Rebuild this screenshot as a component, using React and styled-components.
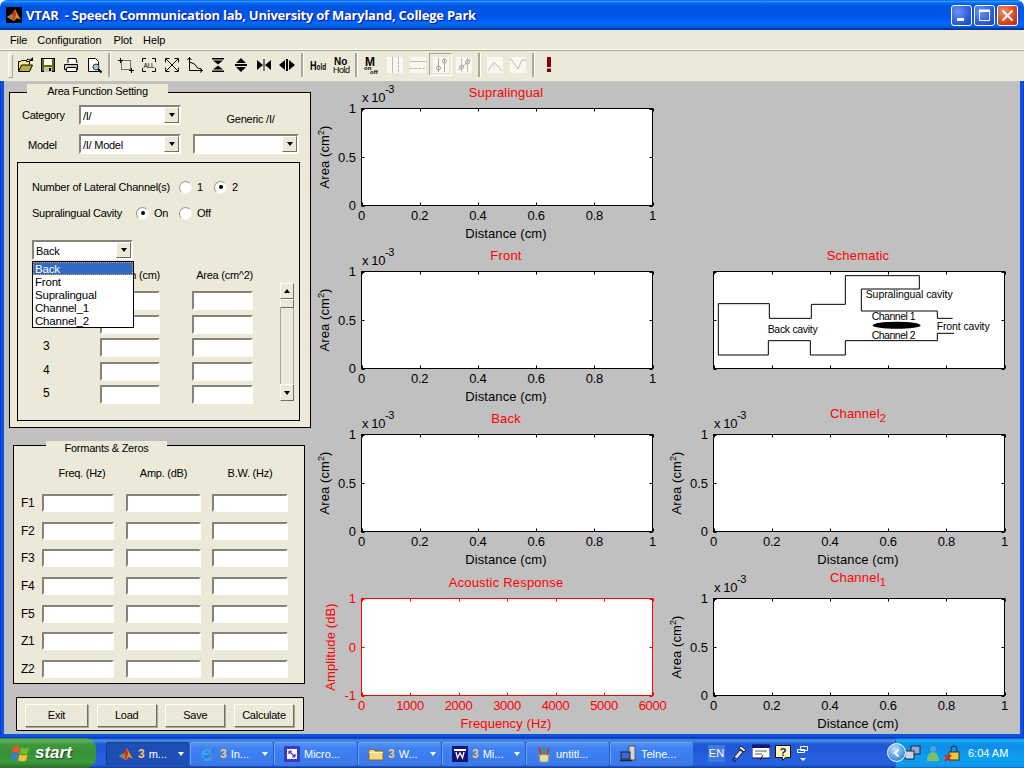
import React from "react";
import styled, { createGlobalStyle } from "styled-components";

const Global = createGlobalStyle`
    html, body { margin: 0; padding: 0; background: #fff; }
    * { box-sizing: border-box; }
    body { font-family: "Liberation Sans", Arial, sans-serif; font-size: 11px; color: #000; }
`
const Screen = styled.div`
    width: 1024px;
    height: 768px;
    display: flex;
    flex-direction: column;
    overflow: hidden;
`
const TitleBar = styled.div`
    height: 30px;
    flex: none;
    display: flex;
    align-items: center;
    padding: 0 6px 0 6px;
    border-radius: 7px 7px 0 0;
    background: linear-gradient(180deg,#0058ee 0%,#3593ff 4%,#288eff 6%,#127dff 8%,#036ffc 10%,#0262ee 14%,#0057e5 20%,#0054e3 24%,#0055eb 56%,#005bf5 66%,#026afe 76%,#0062ef 86%,#0052d6 92%,#0040ab 94%,#003092 100%);
`
const TitleText = styled.div`
    margin-left: 4px;
    flex: 1;
    color: #fff;
    font-family: "Open Sans", "Liberation Sans", sans-serif;
    font-weight: 700;
    font-size: 13px;
    letter-spacing: -0.25px;
    white-space: pre;
    text-shadow: 1px 1px 1px #0f1089;
`
const WinBtn = styled.div`
    width: 21px;
    height: 21px;
    margin-left: 2px;
    border: 1px solid #fff;
    border-radius: 3px;
    display: flex;
    align-items: center;
    justify-content: center;
    background: ${p => p.$close
        ? "radial-gradient(circle at 30% 30%, #f0906a, #d8431c 60%, #b52a0c)"
        : "radial-gradient(circle at 30% 30%, #6d92ee, #2f5ee0 60%, #1a3fb8)"};
`
const MenuBar = styled.div`
    height: 19px;
    flex: none;
    display: flex;
    align-items: center;
    background: #ece9d8;
    padding-left: 10px;
    letter-spacing: -0.1px;
`
const MenuItem = styled.span`
    margin-right: ${p => p.$gap}px;
`
const ToolBar = styled.div`
    height: 32px;
    flex: none;
    display: flex;
    align-items: center;
    padding: 0 0 2px 13px;
    background: #ece9d8;
    border-top: 1px solid #fff;
    box-shadow: inset 0 1px 0 #aca899;
    position: relative;
`
const Grip = styled.div`
    position: absolute;
    left: 8px;
    top: 4px;
    width: 5px;
    height: 24px;
    border: 1px solid #fff;
    border-right-color: #aca899;
    border-bottom-color: #aca899;
`
const ToolBtn = styled.div`
    width: 23px;
    height: 23px;
    flex: none;
    display: flex;
    align-items: center;
    justify-content: center;
    ${p => p.$on && "border: 1px solid; border-color: #aca899 #fff #fff #aca899;"}
`
const ToolSep = styled.div`
    width: ${p => p.$w || 8}px;
    height: 24px;
    flex: none;
    display: flex;
    justify-content: center;
    &::before {
        content: "";
        width: 2px;
        height: 100%;
        background: #aca899;
        border-right: 1px solid #fff;
    }
`
const Frame = styled.div`
    flex: 1;
    min-height: 0;
    padding: 0 4px 4px;
    background: #0855dd;
    box-shadow: inset 1px 0 #0831d9, inset -1px 0 #0831d9, inset 0 -1px #0831d9;
`
const Body = styled.div`
    height: 100%;
    display: flex;
    background: #c0c0c0;
`
const Sidebar = styled.div`
    width: 306px;
    flex: none;
    display: flex;
    flex-direction: column;
    align-items: flex-start;
    letter-spacing: -0.25px;
`
const Panel = styled.div`
    position: relative;
    flex: none;
    border: 1px solid #000;
    background: #ece9d8;
`
const AreaPanel = styled(Panel)`
    margin: 11px 0 0 5px;
    width: 302px;
    height: 336px;
    padding: 12px 0 0 12px;
`
const FormantPanel = styled(Panel)`
    margin: 17px 0 0 9px;
    width: 292px;
    height: 239px;
    padding: 19px 0 0 7px;
`
const ActionPanel = styled(Panel)`
    margin: 13px 0 0 12px;
    width: 288px;
    height: 34px;
    padding: 6px 9px 0 8px;
    display: flex;
    justify-content: space-between;
`
const PanelTab = styled.div`
    position: absolute;
    left: ${p => p.$left}px;
    top: ${p => p.$top}px;
    width: ${p => p.$w}px;
    height: 14px;
    background: #ece9d8;
    text-align: center;
    line-height: 14px;
`
const TopGrid = styled.div`
    display: grid;
    grid-template-columns: 57px 102px 12px 106px;
    grid-template-rows: 20px 20px;
    row-gap: 9px;
`
const FieldLabel = styled.div`
    grid-column: 1;
    grid-row: ${p => p.$row};
    align-self: center;
    padding-left: ${p => p.$indent || 0}px;
    padding-top: ${p => p.$down || 0}px;
`
const GenericLabel = styled.div`
    grid-column: 4;
    grid-row: 1;
    text-align: center;
    padding: 8px 0 0 9px;
`
const Combo = styled.div`
    height: 20px;
    width: ${p => (p.$w ? `${p.$w}px` : "auto")};
    display: flex;
    align-items: center;
    justify-content: space-between;
    padding-left: 2px;
    background: #fff;
    border: 2px solid;
    border-color: #85837a #fff #fff #85837a;
    ${p => p.$col && `grid-column: ${p.$col}; grid-row: ${p.$row};`}
`
const ComboValue = styled.span`
    padding-top: 1px;
`
const ComboArrow = styled.div`
    width: 15px;
    height: 16px;
    margin-left: auto;
    display: flex;
    align-items: center;
    justify-content: center;
    background: #ece9d8;
    border: 1px solid;
    border-color: #fff #716f64 #716f64 #fff;
    &::after {
        content: "";
        border: 3.5px solid transparent;
        border-top: 4px solid #000;
        border-bottom: 0;
    }
`
const InnerBox = styled.div`
    position: relative;
    margin: 8px 0 0 -5px;
    width: 283px;
    height: 259px;
    border: 1px solid #000;
    padding: 16px 0 0 14px;
`
const OptionRow = styled.div`
    display: flex;
    height: 16px;
    align-items: center;
    margin-top: ${p => p.$top || 0}px;
`
const OptionLabel = styled.div`
    width: ${p => p.$w}px;
`
const RadioOption = styled.div`
    width: ${p => p.$w}px;
    display: flex;
    align-items: center;
    gap: 5px;
`
const Radio = styled.span`
    width: 13px;
    height: 13px;
    flex: none;
    border-radius: 50%;
    background: #fff;
    border: 1px solid;
    border-color: #9a9888 #f5f4ec #f5f4ec #9a9888;
    display: flex;
    align-items: center;
    justify-content: center;
    &::after {
        content: "";
        width: 4px;
        height: 4px;
        border-radius: 50%;
        background: ${p => (p.$on ? "#000" : "transparent")};
    }
`
const Selector = styled.div`
    margin-top: 19px;
`
const TableArea = styled.div`
    display: flex;
    margin-top: 7px;
`
const TableCol = styled.div`
    width: 221px;
`
const TableHead = styled.div`
    display: grid;
    grid-template-columns: 128px 93px;
    height: 16px;
    line-height: 16px;
    text-align: right;
`
const TableGrid = styled.div`
    margin-top: 8px;
    display: grid;
    grid-template-columns: 68px 60px 32px 61px;
    grid-auto-rows: 19px;
    row-gap: 4.5px;
`
const RowNum = styled.div`
    padding-left: 11px;
    font-size: 12px;
    line-height: 17px;
`
const Sunken = styled.div`
    height: ${p => p.$h || 19}px;
    width: ${p => (p.$w ? `${p.$w}px` : "auto")};
    background: #fff;
    border: 2px solid;
    border-color: #85837a #fff #fff #85837a;
    ${p => p.$col && `grid-column: ${p.$col};`}
`
const Scrollbar = styled.div`
    margin: 16px 0 0 27px;
    width: 14px;
    height: 118px;
    display: flex;
    flex-direction: column;
    border-left: 1px solid #aca899;
    border-right: 1px solid #aca899;
`
const ScrollBtn = styled.div`
    width: 14px;
    height: ${p => p.$h}px;
    margin-left: -1px;
    background: #ece9d8;
    border: 1px solid;
    border-color: #fff #716f64 #716f64 #fff;
    display: flex;
    align-items: center;
    justify-content: center;
    flex: none;
    &::after {
        ${p => p.$dir && `
        content: "";
        border: 3.5px solid transparent;
        ${p.$dir === "up" ? "border-bottom: 4px solid #000; border-top: 0;" : "border-top: 4px solid #000; border-bottom: 0;"}
        `}
    }
`
const ScrollTrack = styled.div`
    flex: 1;
`
const Dropdown = styled.div`
    position: absolute;
    left: 14px;
    top: 98px;
    width: 102px;
    height: 67px;
    background: #fff;
    border: 1px solid #000;
    z-index: 2;
    font-size: 11.5px;
    letter-spacing: -0.2px;
`
const DropItem = styled.div`
    height: 13px;
    line-height: 14px;
    padding-left: 2px;
    ${p => p.$sel && `
        background: #316ac5;
        color: #fff;
        outline: 1px dotted #e8a33d;
        outline-offset: -1px;
    `}
`
const FormantGrid = styled.div`
    display: grid;
    grid-template-columns: 21px 84px 86px 76px;
    grid-auto-rows: 18px;
    row-gap: 9.67px;
    align-items: center;
`
const FormantHeads = styled(FormantGrid)`
    grid-auto-rows: 16px;
    margin-bottom: 13px;
`
const FormantHead = styled.div`
    grid-column: ${p => p.$col};
    width: ${p => p.$w}px;
    padding-left: ${p => p.$pad || 0}px;
    text-align: center;
`
const FLabel = styled.div`
    font-size: 12px;
`
const ActionBtn = styled.div`
    width: ${p => p.$w}px;
    height: 23px;
    padding-bottom: 2px;
    display: flex;
    align-items: center;
    justify-content: center;
    border: 1px solid;
    border-color: #fff #716f64 #716f64 #fff;
    box-shadow: 1px 1px 0 #aca899;
`
const PlotGrid = styled.div`
    margin-top: 1px;
    display: grid;
    grid-template-columns: 352px 352px;
    grid-template-rows: 163px 163px 164px 163px;
`
const PlotSvg = styled.svg`
    display: block;
    overflow: visible;
    grid-column: ${p => p.$col};
    grid-row: ${p => p.$row};
`
const PlotText = styled.text`
    font-family: "Liberation Sans", Arial, sans-serif;
    font-size: ${p => p.$size || 13}px;
    font-weight: ${p => p.$weight || 400};
    fill: ${p => p.$fill || "#000"};
    letter-spacing: ${p => p.$ls ?? 0}px;
`
const TaskBar = styled.div`
    height: 30px;
    flex: none;
    display: flex;
    align-items: center;
    background: linear-gradient(180deg,#1f2f86 0,#3165c4 3%,#3682e5 6%,#4490e6 10%,#3883e5 12%,#2b71e0 15%,#2663da 18%,#235bd6 20%,#2258d5 23%,#2157d6 38%,#245ddb 54%,#2562df 86%,#245fdc 89%,#2158d4 92%,#1d4ec0 95%,#1941a5 98%);
`
const StartBtn = styled.div`
    width: 96px;
    height: 30px;
    flex: none;
    margin-right: 10px;
    display: flex;
    align-items: center;
    gap: 4px;
    padding-left: 11px;
    border-radius: 0 10px 10px 0;
    color: #fff;
    font-size: 17px;
    font-weight: 700;
    font-style: italic;
    text-shadow: 1px 1px 1px #1c4a1c;
    background: linear-gradient(180deg,#3d7f3d 0,#62b05c 8%,#3f9a3f 20%,#379037 50%,#3c9a3c 80%,#2d6e2d 100%);
`
const TaskBtn = styled.div`
    width: 83px;
    height: 24px;
    flex: none;
    margin: 1px 1px 0 0;
    border-radius: 3px;
    display: flex;
    align-items: center;
    padding-left: ${p => (p.$active ? 12 : 10)}px;
    gap: 4px;
    color: #fff;
    position: relative;
    white-space: nowrap;
    background: ${p => (p.$active ? "#1e4fb4" : "linear-gradient(180deg,#5a94f0,#3c81f3 30%,#3b78e6)")};
    box-shadow: ${p => (p.$active ? "inset 1px 1px 1px #123a8a" : "inset 1px 1px 0 #6fa3f5")};
`
const TaskCount = styled.b`
    color: #ffc766;
    font-size: 12px;
`
const TaskCaret = styled.span`
    position: absolute;
    right: 5px;
    top: 10px;
    border: 3px solid transparent;
    border-top: 4px solid #fff;
    border-bottom: 0;
`
const LangBox = styled.div`
    margin-left: 14px;
    width: 17px;
    height: 17px;
    color: #fff;
    background: #3f79dd;
    text-align: center;
    line-height: 17px;
    flex: none;
`
const LangTools = styled.div`
    display: flex;
    align-items: center;
    gap: 4px;
    margin-left: 5px;
`
const Tray = styled.div`
    margin-left: auto;
    width: 129px;
    height: 30px;
    flex: none;
    position: relative;
    display: flex;
    align-items: center;
    gap: 3px;
    padding-left: 8px;
    color: #fff;
    background: linear-gradient(180deg,#0c59b9 0,#139ee9 5%,#18b5f2 10%,#139beb 15%,#1290e8 20%,#0d8dea 30%,#0d9ff1 65%,#0f9eed 82%,#119be9 90%,#1392e2 95%,#0d5fc4 100%);
    border-left: 1px solid #0e6fc8;
`
const Chevron = styled.div`
    position: absolute;
    left: -9px;
    top: 5px;
    width: 19px;
    height: 19px;
    border-radius: 50%;
    background: radial-gradient(circle at 40% 30%, #bfe0fb, #3b8be6 70%);
    border: 1px solid #fff;
    display: flex;
    align-items: center;
    justify-content: center;
`
const Clock = styled.div`
    margin-left: 4px;
    white-space: nowrap;
`

const MatlabLogo = ({ bg }) => (
    <svg width="16" height="16" viewBox="0 0 16 16" style={{ flex: "none" }}>
        {bg && <rect width="16" height="16" fill="#000" />}
        <path d="M1 10 6 7l3-5 3 6 3 5-4-2-3 3z" fill="#f08a1c" />
        <path d="M6 7 9 2l1 6-2 6-2-3z" fill="#d8261c" />
        <path d="M1 10l5-3 2 3-3 2z" fill="#6f8f6f" />
    </svg>
)

const tool = {
    open: <>
        <path d="M1.5 13.5v-9h2l1-1h4l1 1h3v3" fill="#ffe88c" stroke="#000" />
        <path d="M1.5 14.5 4.5 8h11l-3 6.5z" fill="#b8b040" stroke="#000" />
        <path d="M9 4c1-2 3-2.500 4.500-1" fill="none" stroke="#000" />
        <path d="M12 4h4V0z" />
    </>,
    save: <>
        <rect x="1.500" y="1.500" width="13" height="13" fill="#6b6b00" stroke="#000" />
        <rect x="4" y="2" width="8" height="6" fill="#fff" />
        <rect x="4" y="10" width="8" height="5" fill="#c0c0c0" />
        <rect x="9" y="11" width="2" height="3" />
    </>,
    print: <>
        <path d="M5 6V1.500h8L14 6" fill="#fff" stroke="#000" />
        <path d="M1.500 7.500h13v5h-13z" fill="#c0c0c0" stroke="#000" />
        <path d="M4 10.500h9l1 4H3z" fill="#fff" stroke="#000" />
        <path d="M3 9h2" stroke="#fff" />
    </>,
    preview: <>
        <path d="M2.500 1.500h7l3 3v10h-10z" fill="#fff" stroke="#000" />
        <circle cx="10" cy="10" r="3" fill="#9ac8dc" stroke="#333" />
        <path d="M12 12l3.500 3.500" stroke="#000" strokeWidth="2" />
    </>,
    region: <>
        <rect x="3.500" y="3.500" width="9" height="9" fill="none" stroke="#000" strokeDasharray="1 1" />
        <path d="M0 3.500h5M2.500 1v5M11 13.500h5M13.500 11v5" stroke="#000" />
    </>,
    all: <>
        <path d="M1.500 5V1.500H5M11 1.500h3.500V5M1.500 11v3.500H5M11 14.500h3.500V11" fill="none" stroke="#000" />
        <PlotText x="8" y="10.500" textAnchor="middle" $size={6.500} $ls={-0.2}>ALL</PlotText>
    </>,
    fit: <>
        <path d="M2 2l12 12M14 2 2 14" stroke="#000" />
        <path d="M1.500 5.500v-4h4M10.500 1.500h4v4M1.500 10.500v4h4M14.500 10.500v4h-4" fill="none" stroke="#000" />
    </>,
    axes: <>
        <path d="M2.500 1v12.500H16" fill="none" stroke="#000" />
        <path d="M2.500 5l5 2 3 4 4 1" fill="none" stroke="#000" />
        <path d="M.5 3 2.500.5 4.500 3M13 11.500l2.500 2-2.500 2" fill="none" stroke="#000" />
    </>,
    shrinkV: <path d="M2 1h12v1.500H2zM3 3.500h10L8 7.500zM3 12.500h10L8 8.500zM2 13.500h12V15H2z" />,
    growV: <path d="M8 1l5 5H3zM2 7h12v2H2zM8 15l-5-5h10z" />,
    shrinkH: <path d="M1 3l6 5-6 5zM7.500 2h1v12h-1zM15 3 9 8l6 5z" />,
    growH: <path d="M6 3 0 8l6 5zM7 2h2v12H7zM10 3l6 5-6 5z" />,
    hold: (
        <PlotText x="0" y="13" $size={9} $weight={700} textLength="16" lengthAdjust="spacingAndGlyphs">
            <tspan style={{ fontSize: 13 }}>H</tspan>old
        </PlotText>
    ),
    nohold: (
        <PlotText $size={9}>
            <tspan x="1" y="8" style={{ fontWeight: 700, fontSize: 10 }}>No</tspan>
            <tspan x="0" y="16" style={{ letterSpacing: -0.5 }}>Hold</tspan>
        </PlotText>
    ),
    mtog: (
        <PlotText $size={6} $weight={700}>
            <tspan x="1" y="9" style={{ fontSize: 12 }}>M</tspan>
            <tspan x="0" y="13">on</tspan>
            <tspan x="6" y="17">off</tspan>
        </PlotText>
    ),
    vcursor: <>
        <rect width="16" height="16" fill="#f8f7f0" />
        <path d="M5.500 0v16" stroke="#bbb" />
        <path d="M11.500 0v16" stroke="#bbb" strokeDasharray="3 1" />
    </>,
    hcursor: <>
        <rect width="16" height="16" fill="#f8f7f0" />
        <path d="M0 4.500h16" stroke="#bbb" />
        <path d="M0 11.500h16" stroke="#bbb" strokeDasharray="3 1" />
    </>,
    vmark: <>
        <rect width="16" height="16" fill="#f8f7f0" />
        <path d="M5.500 1v14M11.500 1v14" stroke="#aaa" />
        <circle cx="5.500" cy="11" r="2" fill="none" stroke="#aaa" />
        <circle cx="11.500" cy="4" r="2" fill="none" stroke="#aaa" />
    </>,
    vslope: <>
        <rect width="16" height="16" fill="#f8f7f0" />
        <path d="M5.500 1v14M11.500 1v14M2 13 15 2" stroke="#bbb" />
        <circle cx="5.500" cy="10" r="2" fill="none" stroke="#aaa" />
        <circle cx="11.500" cy="5" r="2" fill="none" stroke="#aaa" />
    </>,
    peak: <>
        <rect width="16" height="16" fill="#f8f7f0" />
        <path d="M1 14 7 5l8 9" fill="none" stroke="#bbb" />
        <path d="M7 5v9" stroke="#ddd" />
    </>,
    valley: <>
        <rect width="16" height="16" fill="#f8f7f0" />
        <path d="M0 1l8 11 4-9h4" fill="none" stroke="#bbb" />
    </>,
    bang: <path d="M6 0h4v10H6zM6 11.500h4V15H6z" fill="#800000" />,
}

const toolbarGroups = [
    { sep: 9, items: ["open", "save", "print", "preview"] },
    { sep: 8, items: ["region", "all", "fit", "axes", "shrinkV", "growV", "shrinkH", "growH"] },
    { sep: 8, items: ["hold", "nohold"] },
    { sep: 8, items: ["mtog", "vcursor", "hcursor", "vmark", "vslope"] },
    { sep: 8, items: ["peak", "valley"] },
    { items: ["bang"] },
]

const Chart = ({ col, row, title, sub, titleY = 15, ylabel, xlabel, color = "#000", xticks, yticks, scale, ylabelX = 19, cm, children, noLabels, ls = -0.3 }) => {
    const L = 51.5, T = 26.5, W = 291, H = 97
    const nx = xticks ? xticks.length - 1 : 5
    const xs = Array.from({ length: nx + 1 })
    return (
        <PlotSvg $col={col} $row={row} width="352" height="163">
            <rect x={L} y={T} width={W} height={H} fill="#fff" stroke={color} />
            {xs.map((_, i) => {
                const x = Math.round(L + (W * i) / nx) + 0.5
                return <path key={i} d={`M${x} ${T}v3M${x} ${T + H}v-3`} stroke={color} />
            })}
            {[0, 1, 2].map((i) => {
                const y = Math.round(T + (H * i) / 2) + 0.5
                return <path key={i} d={`M${L} ${y}h3M${L + W} ${y}h-3`} stroke={color} />
            })}
            <PlotText x="196" y={titleY} textAnchor="middle" $fill="red" $ls={0.2}>
                {title}
                {sub && <tspan dy="4" style={{ fontSize: 11 }}>{sub}</tspan>}
            </PlotText>
            {scale && (
                <PlotText x="52" y="20" $ls={-0.4}>
                    x 10<tspan dy="-9" style={{ fontSize: 11 }}>-3</tspan>
                </PlotText>
            )}
            {!noLabels && xticks.map((t, i) => (
                <PlotText key={t} x={L + (W * i) / nx} y="138" textAnchor="middle" $fill={color} $ls={ls}>{t}</PlotText>
            ))}
            {!noLabels && yticks.map((t, i) => (
                <PlotText key={t} x="46" y={T + (H * i) / (yticks.length - 1) + 4.5} textAnchor="end" $fill={color}>{t}</PlotText>
            ))}
            {!noLabels && (
                <PlotText x="196" y="156" textAnchor="middle" $fill={color} $ls={0.1}>{xlabel}</PlotText>
            )}
            {!noLabels && (
                <PlotText transform={`translate(${ylabelX} 75) rotate(-90)`} textAnchor="middle" $fill={color} $ls={0.1}>
                    {ylabel}
                    {cm && <><tspan dy="-5" style={{ fontSize: 9 }}>2</tspan><tspan dy="5">)</tspan></>}
                </PlotText>
            )}
            {children}
        </PlotSvg>
    )
}

const fracTicks = ["0", "0.2", "0.4", "0.6", "0.8", "1"]
const areaTicks = ["1", "0.5", "0"]

const AreaChart = (props) => (
    <Chart xticks={fracTicks} yticks={areaTicks} xlabel="Distance (cm)" ylabel="Area (cm" cm scale {...props} />
)

// schematic points are read in a 3x crop, so they get scaled down here
const sx = (v) => 28 + v / 3
const sy = (v) => v / 3
const pts = (list) => list.map(([x, y]) => `${sx(x)},${sy(y)}`).join(" ")
const upper = [[85, 330], [85, 176], [238, 176], [238, 220], [364, 220], [364, 178], [466, 178], [466, 92], [688, 92], [688, 132], [514, 132], [514, 198], [742, 198], [742, 220], [788, 220]]
const lower = [[85, 330], [235, 330], [235, 287], [361, 287], [361, 330], [466, 330], [466, 287], [742, 287], [742, 265], [792, 265]]

const Schematic = () => (
    <Chart col={2} row={2} title="Schematic" noLabels>
        <polyline points={pts(upper)} fill="none" stroke="#000" />
        <polyline points={pts(lower)} fill="none" stroke="#000" />
        <ellipse cx={sx(620)} cy={sy(241)} rx="24" ry="3.500" fill="#000" />
        <PlotText x={sx(527)} y={sy(160)} $size={10.500} textLength="87">Supralingual cavity</PlotText>
        <PlotText x={sx(545)} y={sy(225)} $size={10.500} textLength="44">Channel 1</PlotText>
        <PlotText x={sx(545)} y={sy(281)} $size={10.500} textLength="44">Channel 2</PlotText>
        <PlotText x={sx(233)} y={sy(263)} $size={10.500} textLength="50">Back cavity</PlotText>
        <PlotText x={sx(740)} y={sy(254)} $size={10.500} textLength="53">Front cavity</PlotText>
    </Chart>
)

const XpFlag = () => (
    <svg width="20" height="20" viewBox="0 0 20 20" style={{ flex: "none" }}>
        <path d="M2 4c2-1.500 5-1.500 7 0l-1.500 6c-2-1.200-5-1.200-7 0z" fill="#e8562a" />
        <path d="M10 4.500c2 1.500 5 1.500 8 0l-1.500 6c-3 1.200-6 1-8 0z" fill="#7ab82c" />
        <path d="M.5 11c2-1.200 5-1.200 7 0L6 17c-2-1.200-5-1.200-7 0z" fill="#3a7ce0" />
        <path d="M8.500 11.500c2 1 5 1.200 8 0L15 17.500c-3 1.200-6 1-8 0z" fill="#f4c22c" />
    </svg>
)

const taskIcons = {
    matlab: <MatlabLogo />,
    ie: (
        <svg width="16" height="16" viewBox="0 0 16 16">
            <path fillRule="evenodd" d="M1.500 9h10.500C12 5.500 10.500 3 7.500 3 4 3 1.500 5.800 1.500 9c0 3.300 2.400 6 6 6 2.500 0 4.500-1.300 5.500-3.500H9.500c-1 1.500-3.500 1.300-4.300-.5zM4.800 7c.5-1.300 1.500-2 2.700-2s2.200.7 2.400 2z" fill="#3ba3ee" />
            <path d="M2 13c3 0 10-6 13-11" fill="none" stroke="#2a6fc0" />
        </svg>
    ),
    ms: (
        <svg width="16" height="16" viewBox="0 0 16 16">
            <rect width="16" height="16" fill="#3a3ac8" />
            <rect x="3" y="3" width="10" height="10" fill="#fff" />
            <path d="M5 5l6 6M5 5h3M5 5v3M11 11H8M11 11V8" stroke="#3a3ac8" strokeWidth="1.200" fill="none" />
        </svg>
    ),
    folder: (
        <svg width="16" height="16" viewBox="0 0 16 16">
            <path d="M1 3.500h5l1 1.500h8v9H1z" fill="#f8d878" stroke="#8a6a1c" />
            <path d="M1 6.500h14" stroke="#fff3c0" />
        </svg>
    ),
    word: (
        <svg width="16" height="16" viewBox="0 0 16 16">
            <rect width="16" height="16" fill="#14147a" />
            <path d="M2 3h12v2H2z" fill="#fff" />
            <path d="M4 6l1.500 6L8 7l2.500 5L12 6" stroke="#fff" strokeWidth="1.300" fill="none" />
        </svg>
    ),
    paint: (
        <svg width="16" height="18" viewBox="0 0 16 18">
            <path d="M3 9h10l-1 8H4z" fill="#e8d8a0" stroke="#997" />
            <path d="M5 10 3 2M11 10l2-7" strokeWidth="2" fill="none" stroke="#c83a2a" />
            <path d="M8 10V1" strokeWidth="2" stroke="#3a9a3a" />
        </svg>
    ),
    telnet: (
        <svg width="17" height="17" viewBox="0 0 17 17">
            <rect x="9" y="1" width="6" height="14" fill="#d8d8d0" stroke="#555" />
            <rect x="1" y="7" width="9" height="7" fill="#3a6ae0" stroke="#222" />
            <path d="M0 15.500h12" stroke="#222" strokeWidth="1.500" />
        </svg>
    ),
}

const tasks = [
    { icon: "matlab", count: 3, label: "m...", active: true, caret: true },
    { icon: "ie", count: 3, label: "In...", caret: true },
    { icon: "ms", label: "Micro..." },
    { icon: "folder", count: 3, label: "W...", caret: true },
    { icon: "word", count: 3, label: "Mi...", caret: true },
    { icon: "paint", label: "untitl..." },
    { icon: "telnet", label: "Telne..." },
]

const Form = () => (
    <Sidebar>
        <AreaPanel>
            <PanelTab $left={17} $top={-9} $w={141}>Area Function Setting</PanelTab>
            <TopGrid>
                <FieldLabel $row={1}>Category</FieldLabel>
                <Combo $col={2} $row={1}><ComboValue>/I/</ComboValue><ComboArrow /></Combo>
                <GenericLabel>Generic /I/</GenericLabel>
                <FieldLabel $row={2} $indent={6} $down={2}>Model</FieldLabel>
                <Combo $col={2} $row={2}><ComboValue>/I/ Model</ComboValue><ComboArrow /></Combo>
                <Combo $col={4} $row={2}><ComboArrow /></Combo>
            </TopGrid>
            <InnerBox>
                <OptionRow>
                    <OptionLabel $w={147}>Number of Lateral Channel(s)</OptionLabel>
                    <RadioOption $w={35}><Radio />1</RadioOption>
                    <RadioOption $w={35}><Radio $on />2</RadioOption>
                </OptionRow>
                <OptionRow $top={10}>
                    <OptionLabel $w={104}>Supralingual Cavity</OptionLabel>
                    <RadioOption $w={43}><Radio $on />On</RadioOption>
                    <RadioOption $w={43}><Radio />Off</RadioOption>
                </OptionRow>
                <Selector>
                    <Combo $w={101}><ComboValue>Back</ComboValue><ComboArrow /></Combo>
                </Selector>
                <Dropdown>
                    <DropItem $sel>Back</DropItem>
                    <DropItem>Front</DropItem>
                    <DropItem>Supralingual</DropItem>
                    <DropItem>Channel_1</DropItem>
                    <DropItem>Channel_2</DropItem>
                </Dropdown>
                <TableArea>
                    <TableCol>
                        <TableHead>
                            <div>Length (cm)</div>
                            <div>Area (cm^2)</div>
                        </TableHead>
                        <TableGrid>
                            {["", "", 3, 4, 5].map((n, i) => (
                                <React.Fragment key={i}>
                                    <RowNum>{n}</RowNum>
                                    <Sunken />
                                    <Sunken $col={4} />
                                </React.Fragment>
                            ))}
                        </TableGrid>
                    </TableCol>
                    <Scrollbar>
                        <ScrollBtn $h={16} $dir="up" />
                        <ScrollBtn $h={9} />
                        <ScrollTrack />
                        <ScrollBtn $h={17} $dir="down" />
                    </Scrollbar>
                </TableArea>
            </InnerBox>
        </AreaPanel>
        <FormantPanel>
            <PanelTab $left={32} $top={-5} $w={121}>Formants &amp; Zeros</PanelTab>
            <FormantHeads>
                <FormantHead $col={2} $w={72} $pad={8}>Freq. (Hz)</FormantHead>
                <FormantHead $col={3} $w={75}>Amp. (dB)</FormantHead>
                <FormantHead $col={4} $w={76}>B.W. (Hz)</FormantHead>
            </FormantHeads>
            <FormantGrid>
                {["F1", "F2", "F3", "F4", "F5", "Z1", "Z2"].map((f) => (
                    <React.Fragment key={f}>
                        <FLabel>{f}</FLabel>
                        <Sunken $w={72} $h={18} />
                        <Sunken $w={75} $h={18} />
                        <Sunken $w={76} $h={18} />
                    </React.Fragment>
                ))}
            </FormantGrid>
        </FormantPanel>
        <ActionPanel>
            <ActionBtn $w={63}>Exit</ActionBtn>
            <ActionBtn $w={60}>Load</ActionBtn>
            <ActionBtn $w={60}>Save</ActionBtn>
            <ActionBtn $w={60}>Calculate</ActionBtn>
        </ActionPanel>
    </Sidebar>
)

const App = () => (
    <Screen>
        <Global />
        <TitleBar>
            <MatlabLogo bg />
            <TitleText>VTAR  - Speech Communication lab, University of Maryland, College Park</TitleText>
            <WinBtn>
                <svg width="15" height="15" viewBox="0 0 15 15"><rect x="3" y="10" width="7" height="3" fill="#fff" /></svg>
            </WinBtn>
            <WinBtn>
                <svg width="15" height="15" viewBox="0 0 15 15"><path d="M2.500 3.500h10v9h-10z" fill="none" stroke="#fff" /><path d="M2 2.500h11" stroke="#fff" strokeWidth="2" /></svg>
            </WinBtn>
            <WinBtn $close>
                <svg width="15" height="15" viewBox="0 0 15 15"><path d="M2.500 2.500l10 10M12.500 2.500l-10 10" stroke="#fff" strokeWidth="2" /></svg>
            </WinBtn>
        </TitleBar>
        <MenuBar>
            <MenuItem $gap={10}>File</MenuItem>
            <MenuItem $gap={12}>Configuration</MenuItem>
            <MenuItem $gap={11}>Plot</MenuItem>
            <MenuItem $gap={0}>Help</MenuItem>
        </MenuBar>
        <ToolBar>
            <Grip />
            {toolbarGroups.map((g, i) => (
                <React.Fragment key={i}>
                    {g.items.map((name) => (
                        <ToolBtn key={name} $on={name === "vmark"}>
                            <svg width="16" height="16" viewBox="0 0 16 16" style={{ overflow: "visible" }}>{tool[name]}</svg>
                        </ToolBtn>
                    ))}
                    {g.sep && <ToolSep $w={g.sep} />}
                </React.Fragment>
            ))}
        </ToolBar>
        <Frame>
            <Body>
                <Form />
                <PlotGrid>
                    <AreaChart col={1} row={1} title="Supralingual" />
                    <AreaChart col={1} row={2} title="Front" />
                    <Schematic />
                    <AreaChart col={1} row={3} title="Back" />
                    <AreaChart col={2} row={3} title="Channel" sub="2" titleY={10} />
                    <Chart
                        col={1}
                        row={4}
                        title="Acoustic Response"
                        color="red"
                        xticks={["0", "1000", "2000", "3000", "4000", "5000", "6000"]}
                        yticks={["1", "0", "-1"]}
                        xlabel="Frequency (Hz)"
                        ylabel="Amplitude (dB)"
                        ylabelX={25}
                    />
                    <AreaChart col={2} row={4} title="Channel" sub="1" titleY={10} />
                </PlotGrid>
            </Body>
        </Frame>
        <TaskBar>
            <StartBtn><XpFlag />start</StartBtn>
            {tasks.map((t) => (
                <TaskBtn key={t.icon} $active={t.active}>
                    {taskIcons[t.icon]}
                    {t.count && <TaskCount>{t.count}</TaskCount>}
                    {t.label}
                    {t.caret && <TaskCaret />}
                </TaskBtn>
            ))}
            <LangBox>EN</LangBox>
            <LangTools>
                <svg width="18" height="18" viewBox="0 0 18 18"><path d="M4 13l6-7 3 2-6 7z" fill="#ddd" stroke="#222" /><path d="M11 2l5 4-2 2-5-4z" fill="#eee" stroke="#222" /><path d="M4 14c-2 2-1 4 2 3" fill="none" stroke="#111" /></svg>
                <svg width="18" height="18" viewBox="0 0 18 18"><rect y="1" width="18" height="13" fill="#fff" stroke="#112" /><rect y="1" width="18" height="3" fill="#14147a" /><path d="M3 7h12M3 10h7" stroke="#556" /><path d="M11 11l-3 5" stroke="#111" /></svg>
                <svg width="18" height="18" viewBox="0 0 18 18"><path d="M1.500 1.500h15v12h-5l-3 3v-3h-7z" fill="#fff7b0" stroke="#111" /><text x="9" y="12" fontFamily="Liberation Sans, sans-serif" fontSize="11" fontWeight="700" textAnchor="middle" fill="#14147a">?</text></svg>
                <svg width="14" height="18" viewBox="0 0 14 18"><path d="M4.500 2.500h7v4h-7zM1.500 5.500h7v3h-7z" fill="#2562df" stroke="#fff" /><path d="M4 14h6l-3 3z" fill="#fff" /></svg>
            </LangTools>
            <Tray>
                <Chevron>
                    <svg width="10" height="10" viewBox="0 0 10 10"><path d="M6.500 1.500 3 5l3.500 3.500" fill="none" stroke="#fff" strokeWidth="2" /></svg>
                </Chevron>
                <svg width="17" height="17" viewBox="0 0 17 17"><rect x="7" y="1" width="9" height="8" fill="#8fa8d8" stroke="#223" /><rect x="1" y="6" width="9" height="8" fill="#c8d4ec" stroke="#223" /></svg>
                <svg width="17" height="17" viewBox="0 0 17 17"><circle cx="9" cy="4" r="3" fill="#5aa0d8" /><path d="M3 16c0-6 3-9 6-9s6 3 6 9z" fill="#7ac06a" /></svg>
                <svg width="17" height="17" viewBox="0 0 17 17"><path d="M7 7V4a3 3 0 0 1 6 0v3" fill="none" stroke="#222" /><rect x="5" y="7" width="10" height="8" fill="#f0c830" stroke="#333" /><path d="M1 10l6 6M7 10l-6 6" stroke="#e02020" strokeWidth="2" /></svg>
                <Clock>6:04 AM</Clock>
            </Tray>
        </TaskBar>
    </Screen>
)
export default App;
